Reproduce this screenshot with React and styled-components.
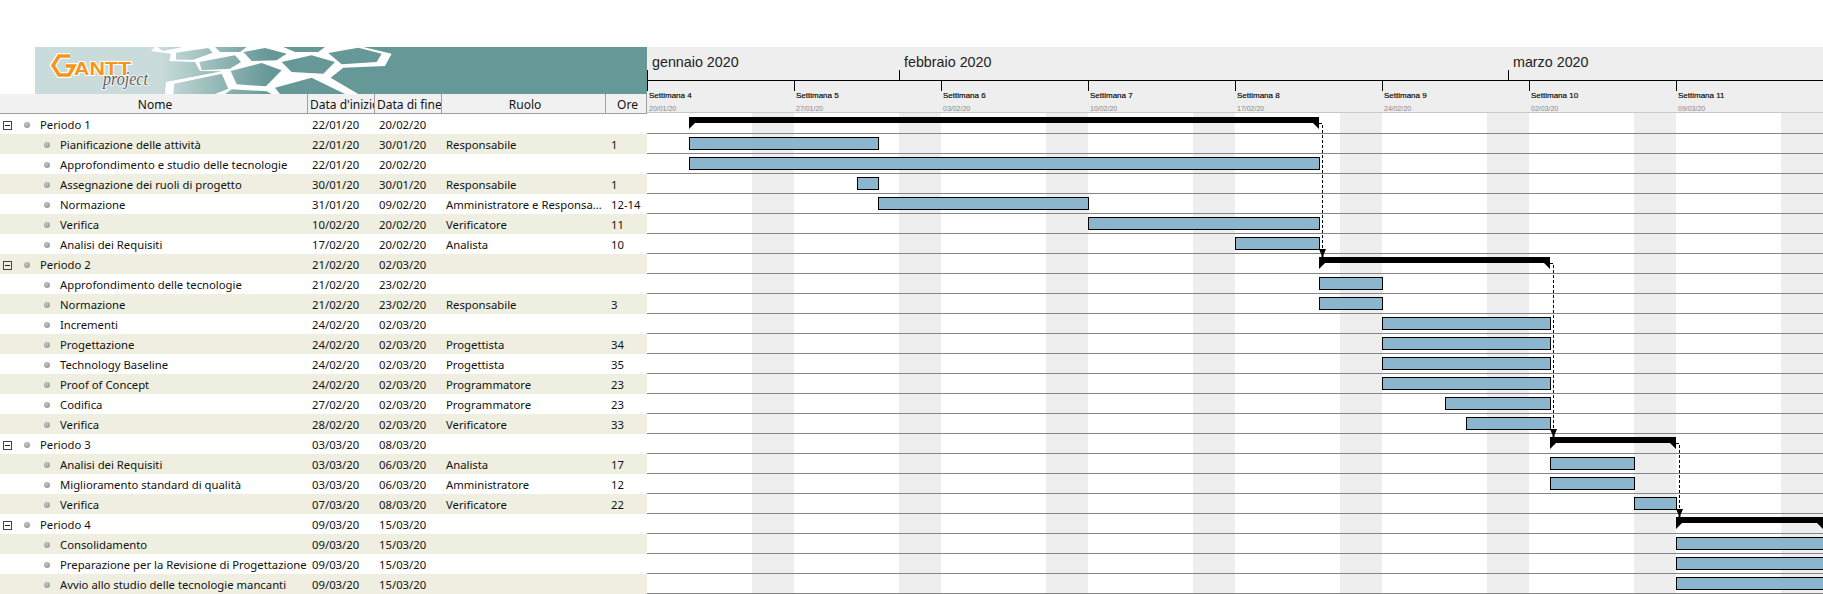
import styled, { createGlobalStyle } from "styled-components";

const DAY = 21;
const WEEK = DAY * 7;
const FIRST_DAY = Date.UTC(2020, 0, 20);

const dayIndex = (date) => {
  const [d, m, y] = date.split("/").map(Number);
  return Math.round((Date.UTC(2000 + y, m - 1, d) - FIRST_DAY) / 86400000);
};

const ROWS = [
  { name: "Periodo 1", start: "22/01/20", end: "20/02/20", summary: true },
  { name: "Pianificazione delle attività", start: "22/01/20", end: "30/01/20", role: "Responsabile", hours: "1" },
  { name: "Approfondimento e studio delle tecnologie", start: "22/01/20", end: "20/02/20" },
  { name: "Assegnazione dei ruoli di progetto", start: "30/01/20", end: "30/01/20", role: "Responsabile", hours: "1" },
  { name: "Normazione", start: "31/01/20", end: "09/02/20", role: "Amministratore e Responsabile", hours: "12-14" },
  { name: "Verifica", start: "10/02/20", end: "20/02/20", role: "Verificatore", hours: "11" },
  { name: "Analisi dei Requisiti", start: "17/02/20", end: "20/02/20", role: "Analista", hours: "10" },
  { name: "Periodo 2", start: "21/02/20", end: "02/03/20", summary: true },
  { name: "Approfondimento delle tecnologie", start: "21/02/20", end: "23/02/20" },
  { name: "Normazione", start: "21/02/20", end: "23/02/20", role: "Responsabile", hours: "3" },
  { name: "Incrementi", start: "24/02/20", end: "02/03/20" },
  { name: "Progettazione", start: "24/02/20", end: "02/03/20", role: "Progettista", hours: "34" },
  { name: "Technology Baseline", start: "24/02/20", end: "02/03/20", role: "Progettista", hours: "35" },
  { name: "Proof of Concept", start: "24/02/20", end: "02/03/20", role: "Programmatore", hours: "23" },
  { name: "Codifica", start: "27/02/20", end: "02/03/20", role: "Programmatore", hours: "23" },
  { name: "Verifica", start: "28/02/20", end: "02/03/20", role: "Verificatore", hours: "33" },
  { name: "Periodo 3", start: "03/03/20", end: "08/03/20", summary: true },
  { name: "Analisi dei Requisiti", start: "03/03/20", end: "06/03/20", role: "Analista", hours: "17" },
  { name: "Miglioramento standard di qualità", start: "03/03/20", end: "06/03/20", role: "Amministratore", hours: "12" },
  { name: "Verifica", start: "07/03/20", end: "08/03/20", role: "Verificatore", hours: "22" },
  { name: "Periodo 4", start: "09/03/20", end: "15/03/20", summary: true },
  { name: "Consolidamento", start: "09/03/20", end: "15/03/20" },
  { name: "Preparazione per la Revisione di Progettazione", start: "09/03/20", end: "15/03/20" },
  { name: "Avvio allo studio delle tecnologie mancanti", start: "09/03/20", end: "15/03/20" },
];

const MONTHS = [
  { label: "gennaio 2020", days: 12 },
  { label: "febbraio 2020", days: 29 },
  { label: "marzo 2020", days: 15 },
];

const WEEKS = [
  ["Settimana 4", "20/01/20"],
  ["Settimana 5", "27/01/20"],
  ["Settimana 6", "03/02/20"],
  ["Settimana 7", "10/02/20"],
  ["Settimana 8", "17/02/20"],
  ["Settimana 9", "24/02/20"],
  ["Settimana 10", "02/03/20"],
  ["Settimana 11", "09/03/20"],
];

// honeycomb of the banner, 3x coordinates: white plate first, then the cells cut out of it
const PLATE = "45,0 670,0 755,20 735,57 610,62 572,92 655,141 75,141 78,105 245,73 180,72 165,45 88,42 92,20 33,12";
const CELLS = [
  "52,0 128,0 68,12",
  "108,17 205,3 218,17 160,38 108,38",
  "225,0 320,0 300,15 240,15",
  "178,45 285,25 303,45 270,65 185,70",
  "310,15 375,3 440,20 410,40 335,42",
  "430,0 555,0 535,15 465,15",
  "272,72 365,48 425,70 378,118 290,112",
  "425,45 515,25 585,45 550,80 455,75",
  "565,18 655,2 725,20 710,45 605,52",
  "103,110 245,80 265,125 225,141 100,141",
  "255,141 275,127 380,133 395,141",
  "405,122 515,92 615,141 420,141",
];

const GlobalStyle = createGlobalStyle`
  html, body {
    margin: 0;
    background: #fff;
  }
`;

const Page = styled.div`
  display: flex;
  width: 1823px;
  height: 594px;
  padding-top: 47px;
  box-sizing: border-box;
  overflow: hidden;
  background: #fff;
`;

const TablePane = styled.div`
  flex: 0 0 647px;
  display: flex;
  flex-direction: column;
  font-family: "Noto Sans", sans-serif;
  font-size: 11.3px;
  color: #111;
`;

const Banner = styled.div`
  margin-left: 35px;
  height: 47px;
  overflow: hidden;
  background: linear-gradient(90deg, #c9dcdb 0, #c9dcdb 125px, #659896 235px);

  svg {
    display: block;
  }
`;

const HeaderRow = styled.div`
  display: grid;
  grid-template-columns: 308px 67px 67px 164px 41px;
  height: 20px;
  background: #f1f1f1;
  border-bottom: 1px solid #a0a0a0;
  box-sizing: border-box;
  font-size: 12px;
`;

const HeaderCell = styled.div`
  padding-left: ${(p) => (p.$left ? "2px" : "3px")};
  border-right: 1px solid #a0a0a0;
  text-align: ${(p) => (p.$left ? "left" : "center")};
  line-height: 21px;
  white-space: nowrap;
  overflow: hidden;
`;

const Row = styled.div`
  display: grid;
  grid-template-columns: 308px 67px 67px 164px 41px;
  height: 20px;
  background: ${(p) => (p.$tinted ? "#eeefe1" : "#fff")};
`;

const NameCell = styled.div`
  display: flex;
  align-items: center;
  padding-left: ${(p) => (p.$summary ? "3px" : "44px")};
  white-space: nowrap;
`;

const NameLabel = styled.span`
  margin-top: 1px;
  line-height: 20px;
`;

const ExpandBox = styled.span`
  position: relative;
  flex: none;
  width: 9px;
  height: 9px;
  margin: 2px 12px 0 0;
  box-sizing: border-box;
  border: 1px solid #444;

  &::after {
    content: "";
    position: absolute;
    left: 1px;
    right: 1px;
    top: 3px;
    height: 1px;
    background: #222;
  }
`;

const Bullet = styled.span`
  flex: none;
  width: 6px;
  height: 6px;
  margin-right: 10px;
  border-radius: 50%;
  background: radial-gradient(circle at 40% 35%, #c4c4c4, #8c8c8c);
`;

const Cell = styled.div`
  padding-left: 4px;
  line-height: 21px;
  white-space: nowrap;
  overflow: hidden;
  text-overflow: ellipsis;
`;

const HoursCell = styled(Cell)`
  padding-left: 5px;
`;

const ChartPane = styled.div`
  flex: 1;
  display: flex;
  flex-direction: column;
  min-width: 0;
`;

const Timeline = styled.div`
  height: 66px;
  background: #eee;
  border-bottom: 1px solid #c8c8c8;
  box-sizing: border-box;
`;

const MonthRow = styled.div`
  display: flex;
  height: 34px;
  border-bottom: 1px solid #000;
  box-sizing: border-box;
`;

const Month = styled.div`
  flex: 0 0 auto;
  display: flex;
  flex-direction: column;
  justify-content: space-between;
  padding-top: 8px;
  box-sizing: border-box;
  font-family: "Liberation Sans", sans-serif;
  font-size: 14.3px;
  line-height: 15px;
  color: #222;
`;

const MonthLabel = styled.span`
  padding-left: 5px;
  white-space: nowrap;
`;

const Tick = styled.span`
  display: block;
  flex: none;
  width: 1px;
  height: 10px;
  background: #000;
`;

const WeekRow = styled.div`
  display: flex;
  font-family: "Liberation Sans", sans-serif;
`;

const Week = styled.div`
  flex: 0 0 ${WEEK}px;
  display: flex;
  flex-direction: column;
`;

const WeekLabel = styled.span`
  padding-left: 2px;
  font-size: 8px;
  line-height: 10px;
  color: #000;
  -webkit-text-stroke: 0.15px #000;
  white-space: nowrap;
`;

const WeekDate = styled.span`
  padding-left: 2px;
  margin-top: 4px;
  font-size: 7px;
  line-height: 8px;
  color: #888;
  white-space: nowrap;
`;

const ChartBody = styled.div`
  position: relative;
  flex: 1;
  padding-top: 1px;
  background: repeating-linear-gradient(90deg, #fff 0 ${DAY * 5}px, #eee ${DAY * 5}px ${WEEK}px);
`;

const ChartRow = styled.div`
  display: flex;
  height: 20px;
  box-sizing: border-box;
  padding-top: 3px;
  border-bottom: 1px solid #858585;
`;

const TaskBar = styled.div`
  flex: none;
  height: 13px;
  box-sizing: border-box;
  background: #8cb6ce;
  border: 1px solid #000;
`;

const SummaryBar = styled.div`
  position: relative;
  flex: none;
  height: 6px;
  background: #000;

  &::before,
  &::after {
    content: "";
    position: absolute;
    top: 6px;
    width: 0;
    height: 0;
    border-top: 6px solid #000;
  }

  &::before {
    left: 0;
    border-right: 6px solid transparent;
  }

  &::after {
    right: 0;
    border-left: 6px solid transparent;
  }
`;

const Links = styled.svg`
  position: absolute;
  left: 0;
  top: 0;
  width: 100%;
  height: 100%;
  pointer-events: none;
`;

const G_MARK = "35,9 24,9 18,18.500 24,28 34,28 39,19 31,19";

const BannerArt = () => (
  <svg width="612" height="47" viewBox="0 0 612 47">
    <defs>
      <linearGradient id="cell" gradientUnits="userSpaceOnUse" x1="60" y1="0" x2="390" y2="0">
        <stop offset="0" stopColor="#c9dcdb" />
        <stop offset="1" stopColor="#659896" />
      </linearGradient>
    </defs>
    <g transform="translate(105 0) scale(0.3333)">
      <polygon points={PLATE} fill="#fff" />
      {CELLS.map((points) => (
        <polygon key={points} points={points} fill="url(#cell)" />
      ))}
    </g>
    <polyline points={G_MARK} fill="none" stroke="#fff" strokeWidth="6" />
    <polyline points={G_MARK} fill="none" stroke="#f7941d" strokeWidth="3.500" />
    <text
      x="39"
      y="28"
      textLength="57"
      lengthAdjust="spacingAndGlyphs"
      fontFamily="Liberation Sans, sans-serif"
      fontWeight="700"
      fontSize="18"
      fill="#f7941d"
      stroke="#fff"
      strokeWidth="2"
      paintOrder="stroke"
    >
      ANTT
    </text>
    <text
      x="68"
      y="38"
      textLength="45"
      lengthAdjust="spacingAndGlyphs"
      fontFamily="Liberation Serif, serif"
      fontStyle="italic"
      fontSize="19"
      fill="#5d5d5d"
      stroke="#fff"
      strokeWidth="1.500"
      paintOrder="stroke"
    >
      project
    </text>
  </svg>
);

const Dependency = ({ from, to }) => {
  // from: summary row that ends, to: summary row that starts
  const x = (dayIndex(ROWS[from].end) + 1) * DAY + 3.5;
  const y0 = from * 20 + 9;
  const y1 = to * 20 - 4;
  return (
    <g>
      <path d={`M${x - 3.500} ${y0 + 0.500}H${x}V${y1}`} fill="none" stroke="#000" strokeDasharray="3 2" />
      <path d={`M${x - 3.500} ${y1 - 1}H${x + 3.500}L${x + 1} ${y1 + 5}V${y1 + 7}H${x - 1}V${y1 + 5}Z`} fill="#000" />
    </g>
  );
};

const ChartBar = ({ row }) => {
  const left = dayIndex(row.start) * DAY;
  const right = (dayIndex(row.end) + 1) * DAY;
  return row.summary ? (
    <SummaryBar style={{ marginLeft: left, width: right - left }} />
  ) : (
    <TaskBar style={{ marginLeft: left, width: right - left + 1 }} />
  );
};

const App = () => (
  <>
    <GlobalStyle />
    <Page>
      <TablePane>
        <Banner>
          <BannerArt />
        </Banner>
        <HeaderRow>
          <HeaderCell>Nome</HeaderCell>
          <HeaderCell $left>Data d'inizio</HeaderCell>
          <HeaderCell $left>Data di fine</HeaderCell>
          <HeaderCell>Ruolo</HeaderCell>
          <HeaderCell>Ore</HeaderCell>
        </HeaderRow>
        {ROWS.map((row, i) => (
          <Row key={i} $tinted={i % 2 === 1}>
            <NameCell $summary={row.summary}>
              {row.summary && <ExpandBox />}
              <Bullet />
              <NameLabel>{row.name}</NameLabel>
            </NameCell>
            <Cell>{row.start}</Cell>
            <Cell>{row.end}</Cell>
            <Cell>{row.role}</Cell>
            <HoursCell>{row.hours}</HoursCell>
          </Row>
        ))}
      </TablePane>
      <ChartPane>
        <Timeline>
          <MonthRow>
            {MONTHS.map((m) => (
              <Month key={m.label} style={{ width: m.days * DAY }}>
                <MonthLabel>{m.label}</MonthLabel>
                <Tick />
              </Month>
            ))}
          </MonthRow>
          <WeekRow>
            {WEEKS.map(([week, date]) => (
              <Week key={week}>
                <Tick />
                <WeekLabel>{week}</WeekLabel>
                <WeekDate>{date}</WeekDate>
              </Week>
            ))}
          </WeekRow>
        </Timeline>
        <ChartBody>
          {ROWS.map((row, i) => (
            <ChartRow key={i}>
              <ChartBar row={row} />
            </ChartRow>
          ))}
          <Links>
            <g transform="translate(0 1)">
              <Dependency from={0} to={7} />
              <Dependency from={7} to={16} />
              <Dependency from={16} to={20} />
            </g>
          </Links>
        </ChartBody>
      </ChartPane>
    </Page>
  </>
);

export default App;
